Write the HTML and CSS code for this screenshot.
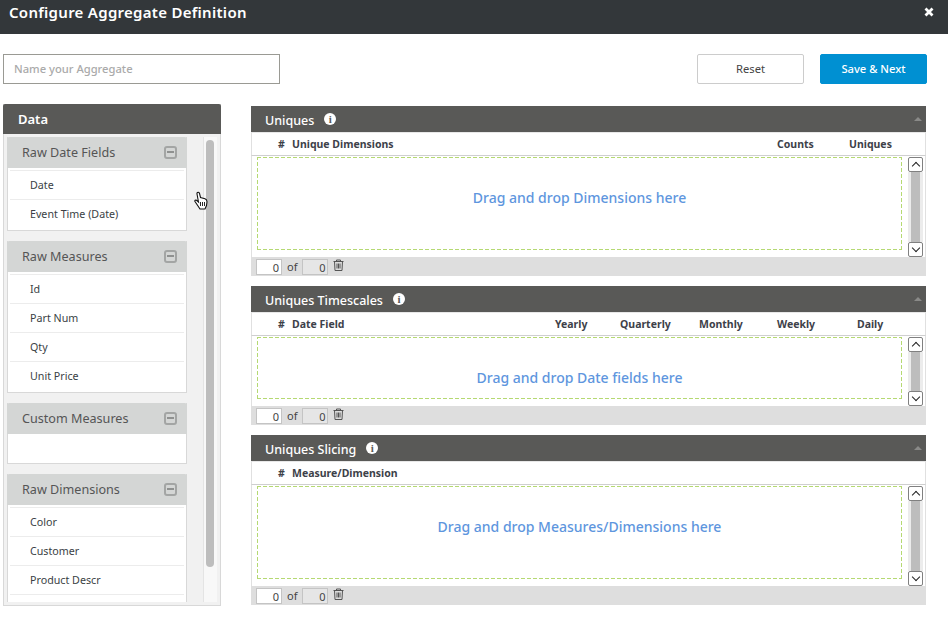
FILE: index.html
```html
<!DOCTYPE html>
<html lang="en">
<head>
    <meta charset="UTF-8">
    <title>Configure Aggregate Definition</title>
    <link rel="stylesheet" href="styles.css">
</head>
<body>
    <header class="title-bar">
        <h1>Configure Aggregate Definition</h1>
        <svg class="close-icon" width="10" height="10" viewBox="0 0 10 10"><path d="M1.500 1.500l7 7M8.500 1.500l-7 7" stroke="#fff" stroke-width="2.800"/></svg>
    </header>

    <div class="toolbar">
        <input type="text" class="name-input" placeholder="Name your Aggregate">
        <div class="toolbar-buttons">
            <button class="btn">Reset</button>
            <button class="btn btn-primary">Save &amp; Next</button>
        </div>
    </div>

    <main class="content">
        <!-- left field list -->
        <aside class="data-panel">
            <div class="data-title">Data</div>
            <div class="data-body">
                <div class="groups">
                    <section class="group">
                        <div class="group-head"><span>Raw Date Fields</span><span class="minus"></span></div>
                        <ul class="group-list">
                            <li>Date</li>
                            <li>Event Time (Date)</li>
                        </ul>
                    </section>
                    <section class="group">
                        <div class="group-head"><span>Raw Measures</span><span class="minus"></span></div>
                        <ul class="group-list">
                            <li>Id</li>
                            <li>Part Num</li>
                            <li>Qty</li>
                            <li>Unit Price</li>
                        </ul>
                    </section>
                    <section class="group">
                        <div class="group-head"><span>Custom Measures</span><span class="minus"></span></div>
                        <div class="group-empty"></div>
                    </section>
                    <section class="group">
                        <div class="group-head"><span>Raw Dimensions</span><span class="minus"></span></div>
                        <ul class="group-list">
                            <li>Color</li>
                            <li>Customer</li>
                            <li>Product Descr</li>
                            <li></li>
                        </ul>
                    </section>
                </div>
                <div class="side-scroll"><div class="side-thumb"></div></div>
            </div>
            <svg class="hand-cursor" width="14" height="20" viewBox="0 0 14 20">
                <path d="M3.500 1.500c1-.6 1.800 0 2 1l1 4 4.500 1.200c1.500.5 2 1.500 2 3l-.5 3.800-1.500 3.500H6L1 10.500c-.5-1 .5-1.800 1.500-1.200L4.500 11 3 3c-.1-.6 0-1.200.5-1.500z" fill="#fff" stroke="#111" stroke-width="1.100"/>
                <path d="M6.500 11v4M8.500 11v4M10.500 11v4" stroke="#111" stroke-width=".9"/>
            </svg>
        </aside>

        <div class="panels">
            <section class="panel">
                <div class="panel-head">
                    <span class="panel-title">Uniques</span>
                    <span class="info">i</span>
                    <span class="collapse"></span>
                </div>
                <div class="cols">
                    <span class="col-num">#</span>
                    <span class="col-main">Unique Dimensions</span>
                    <span class="col-counts">Counts</span>
                    <span class="col-uniques">Uniques</span>
                </div>
                <div class="panel-body tall">
                    <div class="drop">Drag and drop Dimensions here</div>
                    <div class="v-scroll"><span class="arrow up"></span><span class="v-track"></span><span class="arrow down"></span></div>
                </div>
                <div class="pager">
                    <span class="num">0</span> <span class="of">of</span> <span class="num num-off">0</span>
                    <svg class="trash" width="11" height="12" viewBox="0 0 11 12"><path d="M.5 2.500h10M3.500 2.500V1h4v1.500M1.500 2.500l.5 9h7l.5-9M4 4.500v5M5.500 4.500v5M7 4.500v5" fill="none" stroke="#555" stroke-width="1"/></svg>
                </div>
            </section>

            <section class="panel">
                <div class="panel-head">
                    <span class="panel-title">Uniques Timescales</span>
                    <span class="info">i</span>
                    <span class="collapse"></span>
                </div>
                <div class="cols">
                    <span class="col-num">#</span>
                    <span class="col-main">Date Field</span>
                    <span class="col-yearly">Yearly</span>
                    <span class="col-quarterly">Quarterly</span>
                    <span class="col-monthly">Monthly</span>
                    <span class="col-weekly">Weekly</span>
                    <span class="col-daily">Daily</span>
                </div>
                <div class="panel-body short">
                    <div class="drop">Drag and drop Date fields here</div>
                    <div class="v-scroll"><span class="arrow up"></span><span class="v-track"></span><span class="arrow down"></span></div>
                </div>
                <div class="pager">
                    <span class="num">0</span> <span class="of">of</span> <span class="num num-off">0</span>
                    <svg class="trash" width="11" height="12" viewBox="0 0 11 12"><path d="M.5 2.500h10M3.500 2.500V1h4v1.500M1.500 2.500l.5 9h7l.5-9M4 4.500v5M5.500 4.500v5M7 4.500v5" fill="none" stroke="#555" stroke-width="1"/></svg>
                </div>
            </section>

            <section class="panel">
                <div class="panel-head">
                    <span class="panel-title">Uniques Slicing</span>
                    <span class="info">i</span>
                    <span class="collapse"></span>
                </div>
                <div class="cols">
                    <span class="col-num">#</span>
                    <span class="col-main">Measure/Dimension</span>
                </div>
                <div class="panel-body tall">
                    <div class="drop">Drag and drop Measures/Dimensions here</div>
                    <div class="v-scroll"><span class="arrow up"></span><span class="v-track"></span><span class="arrow down"></span></div>
                </div>
                <div class="pager">
                    <span class="num">0</span> <span class="of">of</span> <span class="num num-off">0</span>
                    <svg class="trash" width="11" height="12" viewBox="0 0 11 12"><path d="M.5 2.500h10M3.500 2.500V1h4v1.500M1.500 2.500l.5 9h7l.5-9M4 4.500v5M5.500 4.500v5M7 4.500v5" fill="none" stroke="#555" stroke-width="1"/></svg>
                </div>
            </section>
        </div>
    </main>
</body>
</html>
```

FILE: styles.css
```css
* {
    box-sizing: border-box;
}

body {
    margin: 0;
    height: 622px;
    overflow: hidden;
    background: white;
    font-family: "Noto Sans", "Open Sans", sans-serif;
    font-size: 11px;
    color: #3a3f45;
}

.title-bar {
    height: 34px;
    background: #33373a;
    display: flex;
    align-items: center;
    justify-content: space-between;
    padding: 0 14px 10px 9px;
}

.title-bar h1 {
    margin: 0;
    font-size: 15px;
    font-weight: 600;
    letter-spacing: 0.28px;
    color: white;
}

.close-icon {
    display: block;
}

.toolbar {
    display: flex;
    justify-content: space-between;
    padding: 20px 21px 0 3px;
}

.name-input {
    width: 277px;
    height: 30px;
    border: 1px solid #9a9a94;
    padding: 0 10px 1px;
    font: 500 11.2px "Noto Sans", sans-serif;
    outline: none;
}

.name-input::placeholder {
    color: #aaa;
}

.toolbar-buttons {
    display: flex;
    gap: 16px;
}

.btn {
    width: 107px;
    height: 30px;
    padding: 0 0 2px;
    border: 1px solid #ccc;
    border-radius: 2px;
    background: white;
    color: #444;
    font: 11.2px "Noto Sans", sans-serif;
}

.btn-primary {
    background: #0090d2;
    border-color: #0090d2;
    color: white;
    font-weight: 500;
}

.content {
    display: flex;
    padding: 20px 22px 0 3px;
    gap: 30px;
}

/* left panel */
.data-panel {
    position: relative;
    width: 218px;
    height: 502px;
    border: 1px solid #d8d8d8;
    border-top: none;
    background: #f1f1f1;
    flex-shrink: 0;
}

.data-title {
    height: 30px;
    margin: 0 -1px;
    padding: 0 15px;
    line-height: 30px;
    background: #595957;
    border-radius: 2px 2px 0 0;
    color: white;
    font-size: 13px;
    font-weight: 600;
}

.data-body {
    display: flex;
    height: 465px;
    overflow: hidden;
    margin-top: 3px;
    padding-left: 3px;
}

.groups {
    width: 180px;
    flex-shrink: 0;
}

.group {
    margin-bottom: 10px;
    background: white;
    border: 1px solid #d8d8d8;
    border-top: none;
}

.group-head {
    display: flex;
    align-items: center;
    justify-content: space-between;
    height: 31px;
    margin: 0 -1px;
    padding: 0 10px 1px 15px;
    background: #d4d6d5;
    border-radius: 2px 2px 0 0;
    color: #555;
    font-size: 12.6px;
}

.minus {
    position: relative;
    width: 13px;
    height: 13px;
    border: 2px solid #a3a5a4;
    border-radius: 3px;
}

.minus::after {
    content: "";
    position: absolute;
    left: 1px;
    right: 1px;
    top: 3px;
    height: 2px;
    background: #8f9190;
}

.group-list {
    list-style: none;
    margin: 0;
    padding: 2px 2px 2px;
    font-size: 10.7px;
}

.group-list li {
    height: 29px;
    line-height: 28px;
    padding-left: 20px;
    border-top: 1px solid #ececec;
}

.group-empty {
    height: 29px;
}

.side-scroll {
    width: 14px;
    margin-left: 16px;
    height: 100%;
    background: #f8f8f8;
    border-left: 1px solid #e4e4e4;
    padding: 3px 2px 0 2px;
}

.side-thumb {
    width: 8px;
    height: 427px;
    background: #bdbdbd;
    border-radius: 4px;
}

.hand-cursor {
    position: absolute;
    left: 190px;
    top: 87px;
}

/* right panels */
.panels {
    flex: 1;
    display: flex;
    flex-direction: column;
    gap: 10px;
    padding-top: 2px;
}

.panel-head {
    position: relative;
    display: flex;
    align-items: center;
    height: 26px;
    padding: 2px 0 0 14px;
    background: #595957;
    color: white;
    font-size: 12.5px;
    font-weight: 500;
}

.info {
    width: 12px;
    height: 12px;
    margin: -2px 0 0 10px;
    border-radius: 50%;
    background: white;
    color: #595957;
    font: bold 11px/12px "Liberation Serif", serif;
    text-align: center;
}

.collapse {
    position: absolute;
    right: 4px;
    top: 11px;
    border: 4px solid transparent;
    border-top: none;
    border-bottom: 4px solid #8a8a88;
}

.cols {
    display: flex;
    align-items: center;
    height: 24px;
    border-top: 1px solid #e8e8e8;
    border-right: 1px solid #e0e0e0;
    border-left: 1px solid #e0e0e0;
    border-bottom: 1px solid #cfcfcf;
    font-weight: 700;
    font-size: 10.5px;
    color: #3d4149;
}

.col-num {
    width: 40px;
    padding-left: 26px;
}

.col-main {
    flex: 1;
}

.col-counts {
    width: 72px;
}

.col-uniques {
    width: 76px;
}

.col-yearly {
    width: 65px;
}

.col-quarterly {
    width: 79px;
}

.col-monthly {
    width: 78px;
}

.col-weekly {
    width: 80px;
}

.col-daily {
    width: 68px;
}

.panel-body {
    display: flex;
    padding: 1px 0 0 5px;
    border-left: 1px solid #e0e0e0;
    border-right: 1px solid #e0e0e0;
}

.tall {
    height: 101px;
}

.short {
    height: 70px;
}

.drop {
    flex: 1;
    display: flex;
    align-items: center;
    justify-content: center;
    margin-bottom: 7px;
    color: #5e96de;
    font-size: 14px;
    font-weight: 500;
    background-image:
        repeating-linear-gradient(90deg, #b5d972 0 4px, transparent 4px 6px),
        repeating-linear-gradient(90deg, #b5d972 0 4px, transparent 4px 6px),
        repeating-linear-gradient(0deg, #b5d972 0 4px, transparent 4px 6px),
        repeating-linear-gradient(0deg, #b5d972 0 4px, transparent 4px 6px);
    background-size: 100% 1px, 100% 1px, 1px 100%, 1px 100%;
    background-position: top, bottom, left, right;
    background-repeat: no-repeat;
}

.tall .drop {
    padding-bottom: 12px;
}

.short .drop {
    padding-top: 18px;
}

.v-scroll {
    display: flex;
    flex-direction: column;
    width: 23px;
    padding: 0 2px 0 6px;
}

.arrow {
    position: relative;
    width: 15px;
    height: 15px;
    flex-shrink: 0;
    background: white;
    border: 1px solid #808080;
    border-radius: 2px;
}

.arrow::after {
    content: "";
    position: absolute;
    left: 4px;
    width: 5px;
    height: 5px;
    border-left: 1.500px solid #222;
    border-top: 1.500px solid #222;
}

.up::after {
    top: 5px;
    transform: rotate(45deg);
}

.down::after {
    top: 2px;
    transform: rotate(225deg);
}

.v-track {
    flex: 1;
    background: #bdbdbd;
    border-left: 3px solid #ececec;
    border-right: 3px solid #ececec;
}

.pager {
    display: flex;
    align-items: center;
    height: 19px;
    padding-left: 5px;
    background: #dedede;
    color: #444;
    font-size: 11px;
}

.num {
    width: 26px;
    height: 16px;
    padding-right: 2px;
    line-height: 16px;
    text-align: right;
    background: white;
    border: 1px solid #c4c4c4;
    font-size: 11px;
}

.num-off {
    background: #e6e6e6;
}

.of {
    margin: 0 5px;
}

.trash {
    margin: -3px 0 0 5px;
}
```
